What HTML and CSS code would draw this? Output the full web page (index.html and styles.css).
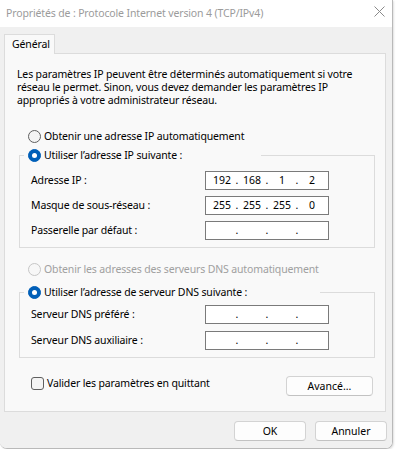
FILE: index.html
```html
<!DOCTYPE html>
<html lang="fr">
<head>
<meta charset="utf-8">
<title>Propriétés IPv4</title>
<link rel="stylesheet" href="styles.css">
</head>
<body>
<div class="window">
  <div class="titlebar">
    <span class="title">Propriétés de : Protocole Internet version 4 (TCP/IPv4)</span>
    <svg class="close" width="11" height="11" viewBox="0 0 11 11"><path d="M0.5 0.5 L10.5 10.5 M10.5 0.5 L0.5 10.5" stroke="#8a8a8a" stroke-width="1" fill="none"/></svg>
  </div>
  <div class="client">
    <div class="tabs"><div class="tab">Général</div></div>
    <div class="panel">
      <p class="intro">Les paramètres IP peuvent être déterminés automatiquement si votre<br>réseau le permet. Sinon, vous devez demander les paramètres IP<br>appropriés à votre administrateur réseau.</p>
      <div class="option"><span class="radio"></span><span>Obtenir une adresse IP automatiquement</span></div>
      <fieldset class="group">
        <legend class="legend legend-ip"><span class="radio on"></span><span>Utiliser l’adresse IP suivante :</span></legend>
        <div class="rows rows-ip">
          <div class="row"><span class="label">Adresse IP :</span>
            <div class="ip"><span>192</span><span class="dot">.</span><span>168</span><span class="dot">.</span><span>1</span><span class="dot">.</span><span>2</span></div></div>
          <div class="row"><span class="label">Masque de sous-réseau :</span>
            <div class="ip"><span>255</span><span class="dot">.</span><span>255</span><span class="dot">.</span><span>255</span><span class="dot">.</span><span>0</span></div></div>
          <div class="row"><span class="label">Passerelle par défaut :</span>
            <div class="ip"><span></span><span class="dot">.</span><span></span><span class="dot">.</span><span></span><span class="dot">.</span><span></span></div></div>
        </div>
      </fieldset>
      <div class="option option-dns disabled"><span class="radio"></span><span>Obtenir les adresses des serveurs DNS automatiquement</span></div>
      <fieldset class="group group-dns">
        <legend class="legend legend-dns"><span class="radio on"></span><span>Utiliser l’adresse de serveur DNS suivante :</span></legend>
        <div class="rows rows-dns">
          <div class="row"><span class="label">Serveur DNS préféré :</span>
            <div class="ip"><span></span><span class="dot">.</span><span></span><span class="dot">.</span><span></span><span class="dot">.</span><span></span></div></div>
          <div class="row"><span class="label">Serveur DNS auxiliaire :</span>
            <div class="ip"><span></span><span class="dot">.</span><span></span><span class="dot">.</span><span></span><span class="dot">.</span><span></span></div></div>
        </div>
      </fieldset>
      <div class="footer-row">
        <div class="check"><span class="box"></span><span>Valider les paramètres en quittant</span></div>
        <button class="btn btn-adv">Avancé...</button>
      </div>
    </div>
    <div class="actions">
      <button class="btn btn-act">OK</button>
      <button class="btn btn-act">Annuler</button>
    </div>
  </div>
</div>
</body>
</html>
```
FILE: styles.css
```css
* { box-sizing: border-box; }
html, body { margin: 0; padding: 0; background: #ffffff; }
body {
  font-family: "Noto Sans", "Open Sans", sans-serif;
  font-size: 10.5px;
  letter-spacing: -0.14px;
  line-height: 13px;
  color: #000;
}
.window {
  width: 393px;
  height: 449px;
  display: flex;
  flex-direction: column;
  border-right: 1px solid #b9b9b9;
  border-bottom: 1px solid #b9b9b9;
  border-radius: 0 0 7px 7px;
  overflow: hidden;
  box-shadow: 1px 1px 2px rgba(0,0,0,0.12);
}
.titlebar {
  height: 27px;
  background: #ffffff;
  display: flex;
  align-items: center;
  justify-content: space-between;
  padding: 0 7px 1px 6px;
  flex: none;
}
.title { color: #9b9b9b; white-space: nowrap; }
.close { margin-top: -3px; margin-right: 0; }
.client {
  flex: 1;
  background: #f0f0f0;
  padding: 7px 6px 0 4px;
  display: flex;
  flex-direction: column;
}
.tabs { display: flex; height: 19px; position: relative; z-index: 1; }
.tab {
  width: 51px;
  height: 20px;
  background: #f9f9f9;
  border: 1px solid #dcdcdc;
  border-bottom: none;
  padding: 3px 0 0 7px;
}
.panel {
  height: 359px;
  background: #f9f9f9;
  border: 1px solid #dcdcdc;
  padding: 14px 10px 0 12px;
  display: flex;
  flex-direction: column;
}
.intro { margin: 0; white-space: nowrap; }
.option {
  display: flex;
  align-items: center;
  height: 14px;
  margin-top: 22px;
  padding-left: 11px;
  gap: 3px;
  white-space: nowrap;
}
.option.disabled { color: #a0a0a0; }
.option-dns { margin-top: 14px; }
.radio {
  width: 13px;
  height: 13px;
  border-radius: 50%;
  border: 1px solid #5f5f5f;
  background: #f4f4f4;
  flex: none;
  display: flex;
  align-items: center;
  justify-content: center;
}
.disabled .radio { border-color: #c6c6c6; background: #f7f7f7; }
.radio.on { background: #005fb8; border-color: #005fb8; }
.radio.on::after {
  content: "";
  width: 5px;
  height: 5px;
  border-radius: 50%;
  background: #ffffff;
}
.group {
  margin: 5px 0 0 2px;
  padding: 0 0 7px 11px;
  border: 1px solid #dcdcdc;
  min-width: 0;
}
.group-dns { margin-top: 9px; padding-bottom: 7px; }
.legend {
  display: flex;
  align-items: center;
  gap: 3px;
  height: 14px;
  padding: 0 0 0 4px;
  margin-left: -7px;
  white-space: nowrap;
}
.legend-ip { width: 237px; }
.legend-dns { width: 296px; }
.rows { display: flex; flex-direction: column; gap: 6px; padding-top: 9px; }
.rows-dns { gap: 7px; padding-top: 6px; }
.row { display: flex; align-items: center; height: 19px; white-space: nowrap; }
.label { width: 174px; flex: none; }
.ip {
  width: 124px;
  height: 19px;
  background: #ffffff;
  border: 1px solid #7a7a7a;
  display: grid;
  grid-template-columns: 24px 6px 24px 6px 24px 6px 24px;
  padding-left: 4px;
  align-items: center;
  text-align: center;
  letter-spacing: 0;
}
.ip span { height: 17px; line-height: 17px; }
.footer-row {
  display: flex;
  justify-content: space-between;
  align-items: flex-start;
  margin-top: 18px;
  padding-left: 14px;
  padding-right: 2px;
}
.check { display: flex; align-items: center; gap: 3px; height: 14px; white-space: nowrap; }
.box {
  width: 13px;
  height: 13px;
  border: 1px solid #5f5f5f;
  border-radius: 3px;
  background: #f4f4f4;
  flex: none;
}
.btn {
  font: inherit;
  color: #000;
  background: #fdfdfd;
  border: 1px solid #d3d3d3;
  border-bottom-color: #c2c2c2;
  border-radius: 4px;
  height: 20px;
  padding: 0;
}
.btn-adv { width: 87px; }
.actions {
  display: flex;
  justify-content: flex-end;
  gap: 9px;
  margin-top: 9px;
  margin-right: -1px;
}
.btn-act { width: 72px; }
```
